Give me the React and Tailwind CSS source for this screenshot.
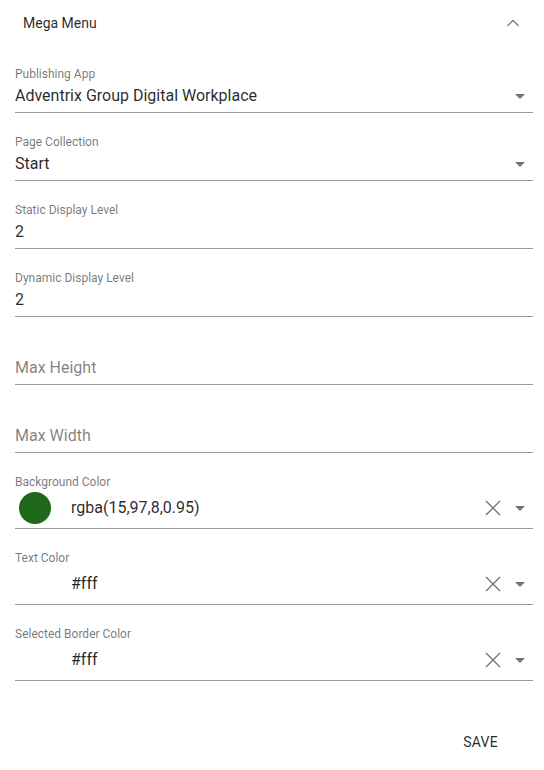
const FONT = { fontFamily: 'Roboto, "Liberation Sans", sans-serif' };

function Caret() {
  return (
    <svg viewBox="0 0 24 24" className="w-6 h-6 shrink-0" fill="rgba(0,0,0,0.54)">
      <path d="M7 10l5 5 5-5z" />
    </svg>
  );
}

function Clear() {
  return (
    <svg viewBox="0 0 24 24" className="w-6 h-6 shrink-0" fill="none" stroke="rgba(0,0,0,0.54)" strokeWidth="1.4">
      <path d="M5 5l14 14M19 5L5 19" />
    </svg>
  );
}

function Field({ label, value, placeholder, select }) {
  return (
    <div className="pt-[21px] border-b border-black/40">
      <div className="h-4 text-[12px] leading-4 text-black/55">{label}</div>
      <div className="mt-[2px] mb-1 h-6 flex items-center">
        <div className={`flex-1 text-[16px] leading-6 ${value ? 'text-black/85' : 'text-black/50'}`}>
          {value || placeholder}
        </div>
        {select && <div className="mr-[1px]"><Caret /></div>}
      </div>
    </div>
  );
}

function ColorField({ label, value, swatch }) {
  return (
    <div className="pt-[21px] border-b border-black/40">
      <div className="h-4 text-[12px] leading-4 text-black/55">{label}</div>
      <div className="mt-[2px] mb-1 h-8 flex items-center">
        <div className="w-14 pl-1 shrink-0">
          {swatch && <div className="w-8 h-8 rounded-full bg-[#1f6719]" />}
        </div>
        <div className="flex-1 text-[16px] leading-6 text-black/85">{value}</div>
        <Clear />
        <div className="ml-[3px] mr-[1px]"><Caret /></div>
      </div>
    </div>
  );
}

export default function App() {
  return (
    <div className="w-[544px] h-[770px] bg-white" style={FONT}>
      <div className="h-[45px] pt-px flex items-center pl-[23px] pr-[19px]">
        <span className="flex-1 text-[14px] text-black/85">Mega Menu</span>
        <svg viewBox="0 0 24 24" className="w-6 h-6" fill="rgba(0,0,0,0.54)">
          <path d="M12 8.5l-6 6 0.9 0.9L12 10.3l5.1 5.1 0.9-0.9z" />
        </svg>
      </div>
      <div className="px-[11px]">
        <div className="pl-1">
          <Field label="Publishing App" value="Adventrix Group Digital Workplace" select />
          <Field label="Page Collection" value="Start" select />
          <Field label="Static Display Level" value="2" />
          <Field label="Dynamic Display Level" value="2" />
          <Field placeholder="Max Height" />
          <Field placeholder="Max Width" />
          <ColorField label="Background Color" value="rgba(15,97,8,0.95)" swatch />
          <ColorField label="Text Color" value="#fff" />
          <ColorField label="Selected Border Color" value="#fff" />
        </div>
      </div>
      <div className="flex justify-end mt-[43px] pr-[30px]">
        <button className="h-9 px-4 text-[14px] font-normal tracking-[0.02em] text-black/85 uppercase">
          Save
        </button>
      </div>
    </div>
  );
}
